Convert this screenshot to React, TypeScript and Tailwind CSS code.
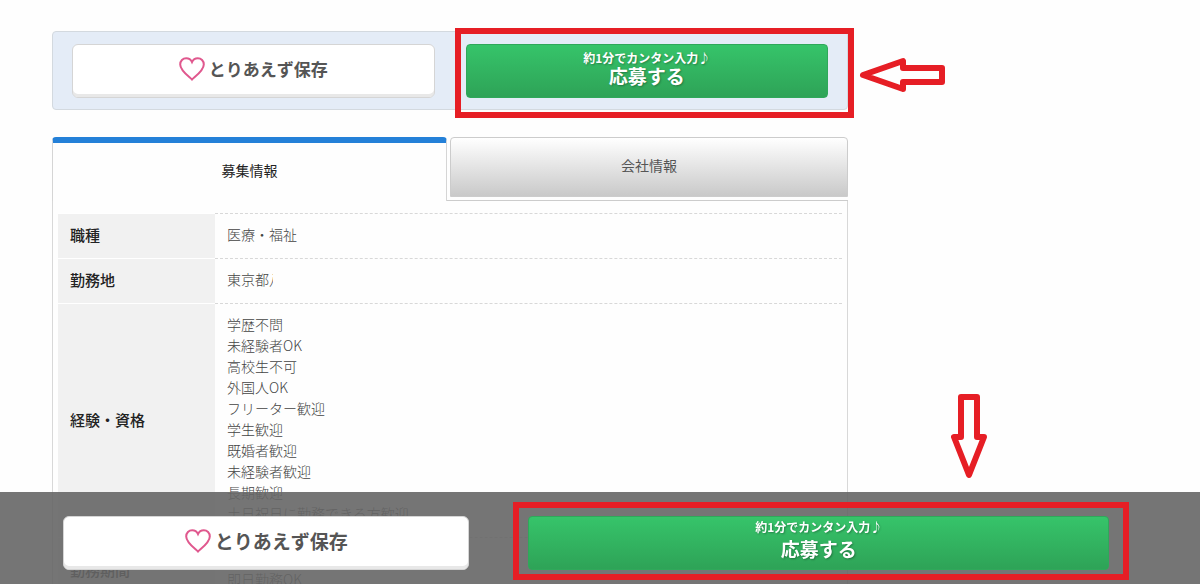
import React from 'react'

const rows = [
    { label: '職種', lines: ['医療・福祉'] },
    { label: '勤務地', lines: ['東京都'], clipped: '八' },
    {
        label: '経験・資格',
        lines: [
            '学歴不問',
            '未経験者OK',
            '高校生不可',
            '外国人OK',
            'フリーター歓迎',
            '学生歓迎',
            '既婚者歓迎',
            '未経験者歓迎',
            '長期歓迎',
            '土日祝日に勤務できる方歓迎',
        ],
    },
    { label: '勤務期間', lines: ['長期', '即日勤務OK'] },
]

const Heart = () => (
    <svg viewBox="0 0 26 24" className="h-6 w-[26px] shrink-0" fill="none" stroke="#e0588e" strokeWidth="2" aria-hidden="true">
        <path d="M13 22.5 C10 19.5 1.2 13.5 1.2 7.4 C1.2 3.9 3.8 1.2 7.2 1.2 C9.9 1.2 11.9 2.6 13 5 C14.1 2.6 16.1 1.2 18.8 1.2 C22.2 1.2 24.8 3.9 24.8 7.4 C24.8 13.5 16 19.5 13 22.5 Z" />
    </svg>
)

const SaveButton = ({ large = false }: { large?: boolean }) => (
    <button
        type="button"
        className={`flex h-[54px] w-full items-center justify-center gap-1 rounded-md border border-[#d5d5d5] bg-white pb-1 font-bold text-[#555] shadow-[inset_0_-3px_0_#e8e8e8] ${large ? 'text-[19px]' : 'text-[17px]'}`}
    >
        <Heart />
        とりあえず保存
    </button>
)

const ApplyButton = ({ large = false }: { large?: boolean }) => (
    <button
        type="button"
        className={`flex h-[54px] w-full flex-col items-center justify-center rounded border border-[#2fa85a] bg-linear-to-b from-[#36c46a] to-[#2ea357] font-bold text-white text-shadow-[1px_1px_2px_rgb(0_0_0/0.3)] ${large ? 'pb-1' : 'pb-1.5'}`}
    >
        <span className="text-xs leading-4">約1分でカンタン入力♪</span>
        <span className={`text-[19px] ${large ? 'leading-7' : 'leading-5'}`}>応募する</span>
    </button>
)

const App = () => {
    return (
        <div className="h-screen overflow-hidden bg-[#fefefe] font-['Noto_Sans_CJK_JP',sans-serif] text-sm text-[#333]">
            <main className="ml-[52px] w-full max-w-[796px] pt-[31px]">

                <div className="grid grid-cols-2 gap-[31px] rounded-sm border border-[#d3d9df] bg-[#e4ecf7] px-[19px] pt-3 pb-[11px]">
                    <SaveButton />
                    <div className="relative">
                        <ApplyButton />
                        {/* highlight frame and arrow */}
                        <div className="pointer-events-none absolute -top-4 -right-[26px] -bottom-5 -left-[11px] border-6 border-[#e61e25]" />
                        <svg
                            viewBox="0 0 88 36"
                            className="absolute top-[13px] left-full ml-[30px] h-9 w-[88px]"
                            fill="none"
                            stroke="#e61e25"
                            strokeWidth="6"
                            strokeLinejoin="round"
                            aria-hidden="true"
                        >
                            <path d="M5 18 L45 4 V11 H84 V25 H45 V32 Z" />
                        </svg>
                    </div>
                </div>

                <div className="mt-[27px] flex" role="tablist">
                    <button
                        type="button"
                        role="tab"
                        aria-selected="true"
                        className="h-16 w-[395px] rounded-t border-x border-t-6 border-x-[#d5d5d5] border-t-[#2480d8] pb-1 text-[#222]"
                    >
                        募集情報
                    </button>
                    <div className="flex-1 border-b border-[#ccc] pb-[3px] pl-[3px]">
                        <button
                            type="button"
                            role="tab"
                            aria-selected="false"
                            className="h-[60px] w-full rounded-t border border-[#ccc] bg-linear-to-b from-white to-[#c9c9c9] pb-1 text-[#555]"
                        >
                            会社情報
                        </button>
                    </div>
                </div>

                <div className="border-x border-[#d8d8d8] px-[5px] pt-3">
                    <table className="w-full border-collapse">
                        <tbody>
                            {rows.map((row) => (
                                <tr key={row.label}>
                                    <th
                                        scope="row"
                                        className="w-[157px] border-t border-white bg-[#f1f1f1] px-3 pb-0.5 text-left text-[15px] font-medium text-[#222]"
                                    >
                                        {row.label}
                                    </th>
                                    <td className="border-t border-dashed border-[#d8d8d8] px-3 pt-[10px] pb-[13px] font-light text-[#444]">
                                        {row.lines.map((line) => (
                                            <div key={line} className="flex leading-[21px]">
                                                {line}
                                                {row.clipped && (
                                                    <span className="w-1 overflow-hidden">{row.clipped}</span>
                                                )}
                                            </div>
                                        ))}
                                    </td>
                                </tr>
                            ))}
                        </tbody>
                    </table>
                </div>

            </main>

            <div className="fixed inset-x-0 bottom-0 grid grid-cols-[7fr_10fr] gap-[59px] bg-[#666]/90 pt-6 pr-[91px] pb-[14px] pl-[63px]">
                <SaveButton large />
                <div className="relative">
                    <ApplyButton large />
                    <div className="pointer-events-none absolute -top-[14px] -right-5 -bottom-[10px] -left-[15px] border-6 border-[#e61e25]" />
                    <svg
                        viewBox="0 0 36 88"
                        className="absolute right-[122px] bottom-full mb-9 h-[88px] w-9"
                        fill="none"
                        stroke="#e61e25"
                        strokeWidth="6"
                        strokeLinejoin="round"
                        aria-hidden="true"
                    >
                        <path d="M18 83 L3 45 H10 V5 H26 V45 H33 Z" />
                    </svg>
                </div>
            </div>
        </div>
    )
}

export default App
